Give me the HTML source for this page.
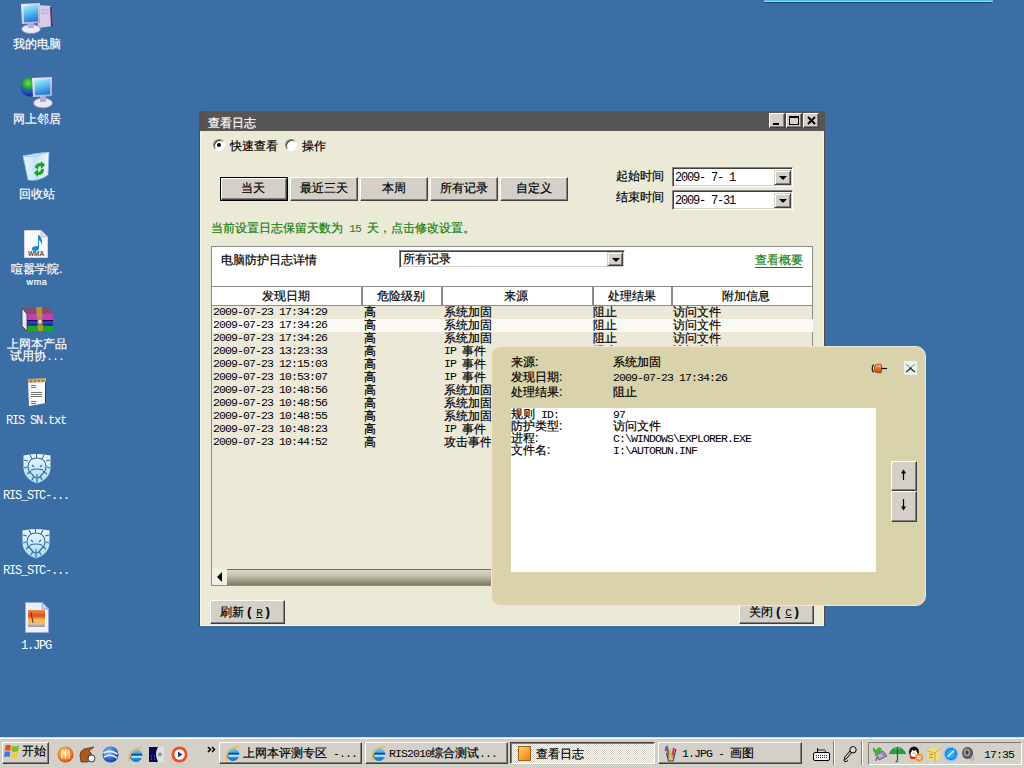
<!DOCTYPE html>
<html><head><meta charset="utf-8">
<style>
*{margin:0;padding:0;box-sizing:border-box}
html,body{width:1024px;height:768px;overflow:hidden}
body{background:#3a6ea5;font-family:"Liberation Sans",sans-serif;-webkit-text-stroke:0.2px;font-size:12px;line-height:12px;color:#000;position:relative}
.a{position:absolute;white-space:nowrap}
.d{font-family:"Liberation Mono",monospace;font-size:11.5px;letter-spacing:-0.9px;-webkit-text-stroke:0}
.lbl{color:#fff;position:absolute;white-space:nowrap;text-align:center;left:0;width:74px;line-height:13px}
.btn{position:absolute;background:#d4d0c8;border:1px solid;border-color:#fff #404040 #404040 #fff;box-shadow:inset -1px -1px 0 #808080;text-align:center}
.sunk{position:absolute;background:#fff;border:1px solid;border-color:#808080 #fff #fff #808080;box-shadow:inset 1px 1px 0 #404040,inset -1px -1px 0 #d4d0c8}
.dd{position:absolute;right:2px;top:2px;bottom:2px;width:16px;background:#d4d0c8;border:1px solid;border-color:#d4d0c8 #404040 #404040 #d4d0c8;box-shadow:inset 1px 1px 0 #fff,inset -1px -1px 0 #808080}
.dd:after{content:"";position:absolute;left:4px;top:5px;border-left:4px solid transparent;border-right:4px solid transparent;border-top:4px solid #000}
.t{line-height:12px}
.d1{position:relative;top:-1px}
.d12{font-size:12px;letter-spacing:-1.2px}
.g{color:#148414}
</style></head><body>

<!-- top blue bar -->
<div class="a" style="left:764px;top:0;width:229px;height:3px;background:linear-gradient(#52b8e8 0,#52b8e8 1px,#88e2fc 1px,#88e2fc 2px,#0a4a7a 2px);border-radius:0 0 3px 3px"></div><div class="a" style="left:765px;top:3px;width:227px;height:1px;background:#3070a8"></div>

<!-- DESKTOP ICONS -->
<svg width="0" height="0" style="position:absolute"><defs>
<linearGradient id="scr" x1="0" y1="0" x2="0.3" y2="1"><stop offset="0" stop-color="#b4f0fc"/><stop offset="0.5" stop-color="#5cc0f0"/><stop offset="1" stop-color="#2a7ed8"/></linearGradient>
<linearGradient id="frm" x1="0" y1="0" x2="1" y2="1"><stop offset="0" stop-color="#f4f4fc"/><stop offset="1" stop-color="#a8a4d0"/></linearGradient>
<radialGradient id="glb" cx="0.4" cy="0.3" r="0.7"><stop offset="0" stop-color="#6ae05a"/><stop offset="0.45" stop-color="#1a9a2a"/><stop offset="0.55" stop-color="#2a5ad0"/><stop offset="1" stop-color="#1a2a90"/></radialGradient>
<linearGradient id="bin" x1="0" y1="0" x2="1" y2="0"><stop offset="0" stop-color="#e8f6fe"/><stop offset="0.5" stop-color="#c4e4fa"/><stop offset="1" stop-color="#f0faff"/></linearGradient>
<linearGradient id="shd" x1="0" y1="0" x2="0" y2="1"><stop offset="0" stop-color="#f0faff"/><stop offset="1" stop-color="#a0d8f8"/></linearGradient>
<linearGradient id="sun" x1="0" y1="0" x2="0" y2="1"><stop offset="0" stop-color="#f09048"/><stop offset="0.35" stop-color="#d85020"/><stop offset="0.55" stop-color="#f8b050"/><stop offset="0.8" stop-color="#f0c070"/><stop offset="1" stop-color="#9890c8"/></linearGradient>
</defs></svg>
<div class="a" style="left:0;top:0;width:75px;height:700px">
  <!-- my computer -->
  <svg class="a" style="left:20px;top:2px" width="34" height="32" viewBox="0 0 34 32">
    <path d="M17 3 L32 4 L33 24 L18 26 Z" fill="#d6cce6"/>
    <path d="M32 4 L33 24 L31 25 L30 5 Z" fill="#3a3a70"/>
    <path d="M21 8 H29 M21 11 H29" stroke="#b0a8cc" stroke-width="1"/>
    <ellipse cx="11" cy="27" rx="9.5" ry="4.5" fill="#ece8f6" stroke="#8c88b8" stroke-width="0.8"/>
    <rect x="8" y="20" width="6" height="6" fill="#b4acd8"/>
    <path d="M1 2 L20 1 L20 21 L2 22 Z" fill="url(#frm)"/>
    <path d="M3.5 4 L18 3.3 L18 19.5 L4 20.2 Z" fill="url(#scr)"/>
  </svg>
  <div class="lbl" style="top:38px">我的电脑</div>
  <!-- network -->
  <svg class="a" style="left:20px;top:76px" width="34" height="33" viewBox="0 0 34 33">
    <circle cx="10" cy="11" r="9.5" fill="url(#glb)"/>
    <ellipse cx="23" cy="27" rx="9.5" ry="5" fill="#ece8f6" stroke="#8c88b8" stroke-width="0.8"/>
    <rect x="20" y="19" width="6" height="7" fill="#b4acd8"/>
    <path d="M12 2 L32 1 L32 20 L13 21 Z" fill="url(#frm)"/>
    <path d="M14.5 4 L30 3.3 L30 18.5 L15 19.2 Z" fill="url(#scr)"/>
  </svg>
  <div class="lbl" style="top:113px">网上邻居</div>
  <!-- recycle bin -->
  <svg class="a" style="left:22px;top:152px" width="28" height="30" viewBox="0 0 28 30">
    <path d="M1 4 Q14 1 27 0 L26 23 Q16 30 6 28 Z" fill="url(#bin)" stroke="#88b8e0" stroke-width="0.8"/>
    <path d="M1 4 Q14 6 27 0" fill="none" stroke="#a8d0f0"/>
    <path d="M13 16 Q13 11 19 11 L19 9 L23 13 L19 17 L19 14 Q16 14 16 17 Z" fill="#18a818"/>
    <path d="M22 17 Q22 23 16 23 L16 25 L12 21 L16 17 L16 20 Q19 20 19 17 Z" fill="#18a818"/>
  </svg>
  <div class="lbl" style="top:188px">回收站</div>
  <!-- wma -->
  <svg class="a" style="left:24px;top:230px" width="25" height="28" viewBox="0 0 25 28">
    <path d="M0.5 0.5 L17 0.5 L23.5 7 L23.5 27.5 L0.5 27.5 Z" fill="#fbfbff" stroke="#d0d4e8"/>
    <path d="M17 0.5 L17 7 L23.5 7" fill="#e0e0ee" stroke="#c0c4d8"/>
    <path d="M14 5 L15 5 Q19 9 18 15 Q17 11 15 10 L15 18 Q15 21 11 21 Q7 21 8 18 Q9 16 13 16 L14 16 Z" fill="#1e88d8"/>
    <text x="12" y="26" font-size="6.5" font-weight="bold" text-anchor="middle" fill="#505050" font-family="Liberation Sans">WMA</text>
  </svg>
  <div class="lbl" style="top:263px;left:-1px;width:76px">喧嚣学院.</div>
  <div class="lbl" style="top:276px;font-family:'Liberation Sans';font-size:9px;letter-spacing:0.6px">wma</div>
  <!-- winrar -->
  <svg class="a" style="left:21px;top:306px" width="33" height="26" viewBox="0 0 33 26">
    <path d="M3 2 L28 1 L32 8 L6 9 Z" fill="#8a4a6a"/>
    <path d="M6 8 L32 8 L32 15 L6 15 Z" fill="#c040b0"/>
    <path d="M6 15 L32 15 L32 19 L6 19 Z" fill="#2838d8"/>
    <path d="M6 19 L32 19 L32 25 L6 25 Z" fill="#18a828"/>
    <path d="M6 14.5 H32 M6 19 H32" stroke="#101040" stroke-width="1"/>
    <path d="M1 2 L6 8 L6 25 L1 20 Z" fill="#f0e8f0" stroke="#303050" stroke-width="0.8"/>
    <path d="M15 1 L21 1 L22 25 L17 25 Z" fill="#c89838" opacity="0.85"/>
    <rect x="17" y="13" width="4" height="5" fill="#e8e0c0" stroke="#404040" stroke-width="0.6"/>
  </svg>
  <div class="lbl" style="top:338px;left:-1px;width:76px">上网本产品</div>
  <div class="lbl" style="top:350px">试用协<span class="d">...</span></div>
  <!-- txt -->
  <svg class="a" style="left:27px;top:377px" width="20" height="30" viewBox="0 0 20 30">
    <path d="M1 3 L19 2 L19 26 L2 29 Z" fill="#f8faff"/>
    <path d="M19 2 L19 26 L18 26 L18 2 Z" fill="#303a60"/>
    <path d="M1 2 L19 1 L19 5 L1 6 Z" fill="#c8b060"/>
    <path d="M3 4 h2 M7 4 h2 M11 4 h2 M15 4 h2" stroke="#a05050" stroke-width="1.5"/>
    <path d="M4 8.5 H9 M4 10.5 H9 M4 15.5 H15 M4 17.5 H15 M4 19.5 H15 M4 24.5 H9 M4 26.5 H9" stroke="#707868" stroke-width="1"/>
  </svg>
  <div class="lbl" style="top:414px;left:-1px"><span class="d d12">RIS&nbsp;SN.txt</span></div>
  <!-- shields -->
  <svg class="a" style="left:23px;top:453px" width="28" height="31" viewBox="0 0 28 31">
    <path d="M0.5 2.5 Q14 -0.5 27.5 2.5 L27.5 15 Q27 26 14 30.5 Q1 26 0.5 15 Z" fill="url(#shd)"/>
    <path d="M13.5 1 V5 M7 2 L9 6 M21 2 L19 6 M1 7 L5 8 M27 7 L23 8 M1 15 L4 14 M27 15 L24 14 M4 21 L8 18 M24 21 L20 18 M9 27 L11 23 M19 27 L17 23 M14 30 V25" stroke="#3a6a98" stroke-width="1.1" fill="none"/>
    <path d="M14 5 Q22 5 23 13 Q23 19 19 21 Q17 25 14 25 Q11 25 9 21 Q5 19 5 13 Q6 5 14 5 Z" fill="none" stroke="#3a6a98" stroke-width="1.2"/>
    <path d="M8 17 Q14 15 20 17 M9 12 L11 14 M19 12 L17 14 M14 21 L14 25" stroke="#3a6a98" stroke-width="1.1" fill="none"/>
  </svg>
  <div class="lbl" style="top:489px;left:-2px;width:76px"><span class="d d12">RIS_STC-...</span></div>
  <svg class="a" style="left:22px;top:528px" width="28" height="31" viewBox="0 0 28 31">
    <path d="M0.5 2.5 Q14 -0.5 27.5 2.5 L27.5 15 Q27 26 14 30.5 Q1 26 0.5 15 Z" fill="url(#shd)"/>
    <path d="M13.5 1 V5 M7 2 L9 6 M21 2 L19 6 M1 7 L5 8 M27 7 L23 8 M1 15 L4 14 M27 15 L24 14 M4 21 L8 18 M24 21 L20 18 M9 27 L11 23 M19 27 L17 23 M14 30 V25" stroke="#3a6a98" stroke-width="1.1" fill="none"/>
    <path d="M14 5 Q22 5 23 13 Q23 19 19 21 Q17 25 14 25 Q11 25 9 21 Q5 19 5 13 Q6 5 14 5 Z" fill="none" stroke="#3a6a98" stroke-width="1.2"/>
    <path d="M8 17 Q14 15 20 17 M9 12 L11 14 M19 12 L17 14 M14 21 L14 25" stroke="#3a6a98" stroke-width="1.1" fill="none"/>
  </svg>
  <div class="lbl" style="top:564px;left:-2px;width:76px"><span class="d d12">RIS_STC-...</span></div>
  <!-- jpg -->
  <svg class="a" style="left:25px;top:602px" width="24" height="31" viewBox="0 0 24 31">
    <path d="M0.5 0.5 L17 0.5 L23.5 7 L23.5 30.5 L0.5 30.5 Z" fill="#eaf0fe" stroke="#9aa8d8"/>
    <path d="M17 0.5 L17 7 L23.5 7" fill="#c8d4f4" stroke="#9aa8d8"/>
    <rect x="3" y="8" width="17" height="17" fill="url(#sun)"/>
    <path d="M6 10 L8 21" stroke="#503030" stroke-width="1"/>
  </svg>
  <div class="lbl" style="top:639px;left:-1px"><span class="d d12">1.JPG</span></div>
</div>

<!-- MAIN WINDOW -->
<div class="a" style="left:199px;top:111px;width:626px;height:515px;background:#ebead6;border:1px solid #4e4c48;border-top:0;border-bottom:0;box-shadow:inset 1px 0 0 #fbf4e2,inset -1px 0 0 #fbf4e2,inset 0 -1px 0 #fdf8e6">
 <div class="a" style="left:0;top:-1px;width:624px;height:516px">
  <div class="a" style="left:-1px;top:1px;width:626px;height:20px;background:#585555"></div>
  <div class="a" style="left:-1px;top:1px;width:9px;height:20px;background:linear-gradient(90deg,#5c4e4a,#585555)"></div>
  <div class="a" style="left:8px;top:7px;color:#fff">查看日志</div>
  <div class="btn" style="left:569px;top:3px;width:16px;height:15px"><div class="a" style="left:3px;top:9px;width:6px;height:2px;background:#000"></div></div>
  <div class="btn" style="left:586px;top:3px;width:16px;height:15px"><div class="a" style="left:2px;top:2px;width:10px;height:9px;border:1px solid #000;border-top-width:2px"></div></div>
  <div class="btn" style="left:603px;top:3px;width:16px;height:15px"><svg class="a" style="left:3px;top:2px" width="9" height="9"><path d="M1 1 L8 8 M8 1 L1 8" stroke="#000" stroke-width="2"/></svg></div>

  <!-- radios -->
  <div class="a" style="left:13px;top:29px;width:12px;height:12px;border-radius:50%;background:#fff;border:1px solid;border-color:#808080 #fff #fff #808080;box-shadow:inset 1px 1px 0 #404040"><div class="a" style="left:3px;top:3px;width:4px;height:4px;border-radius:50%;background:#000"></div></div>
  <div class="a" style="left:30px;top:30px">快速查看</div>
  <div class="a" style="left:85px;top:29px;width:12px;height:12px;border-radius:50%;background:#fff;border:1px solid;border-color:#808080 #fff #fff #808080;box-shadow:inset 1px 1px 0 #404040"></div>
  <div class="a" style="left:102px;top:30px">操作</div>

  <!-- buttons row -->
  <div class="a" style="left:20px;top:67px;width:68px;height:24px;border:1px solid #000"></div>
  <div class="btn" style="left:21px;top:68px;width:66px;height:22px;line-height:19px;padding-right:3px">当天</div>
  <div class="btn" style="left:90px;top:67px;width:68px;height:24px;line-height:21px">最近三天</div>
  <div class="btn" style="left:160px;top:67px;width:68px;height:24px;line-height:21px">本周</div>
  <div class="btn" style="left:230px;top:67px;width:68px;height:24px;line-height:21px">所有记录</div>
  <div class="btn" style="left:300px;top:67px;width:68px;height:24px;line-height:21px">自定义</div>

  <!-- date pickers -->
  <div class="a" style="left:416px;top:60px">起始时间</div>
  <div class="a" style="left:416px;top:81px">结束时间</div>
  <div class="sunk" style="left:472px;top:57px;width:121px;height:20px"><div class="a d" style="left:2px;top:4px;font-size:12px;letter-spacing:-1.2px">2009-&nbsp;7-&nbsp;1</div><div class="dd" style="right:1px;top:2px;bottom:1px;width:17px"></div></div>
  <div class="sunk" style="left:472px;top:80px;width:121px;height:20px"><div class="a d" style="left:2px;top:4px;font-size:12px;letter-spacing:-1.2px">2009-&nbsp;7-31</div><div class="dd" style="right:1px;top:2px;bottom:1px;width:17px"></div></div>

  <div class="a g" style="left:11px;top:112px">当前设置日志保留天数为<span class="d">&nbsp;15&nbsp;</span>天，点击修改设置。</div>

  <!-- list panel -->
  <div class="a" style="left:11px;top:136px;width:602px;height:340px;border:1px solid #8c8c8c;background:#ece9d8">
    <div class="a" style="left:0;top:0;width:600px;height:58px;background:#fff"></div>
    <div class="a" style="left:9px;top:7px">电脑防护日志详情</div>
    <div class="sunk" style="left:187px;top:3px;width:226px;height:18px"><div class="a" style="left:3px;top:2px">所有记录</div><div class="dd" style="right:1px;top:1px;bottom:1px"></div></div>
    <div class="a g" style="left:543px;top:7px;border-bottom:1px solid #148414;padding-bottom:1px">查看概要</div>
    <!-- header -->
    <div class="a" style="left:0;top:39px;width:600px;height:20px;border-top:1px solid #8c8c8c;border-bottom:1px solid #8c8c8c;background:#fff"></div>
    <div class="a" style="left:149px;top:40px;width:2px;height:18px;background:#8c8c8c"></div>
    <div class="a" style="left:229px;top:40px;width:2px;height:18px;background:#8c8c8c"></div>
    <div class="a" style="left:380px;top:40px;width:2px;height:18px;background:#8c8c8c"></div>
    <div class="a" style="left:459px;top:40px;width:2px;height:18px;background:#8c8c8c"></div>
    <div class="a" style="left:-1px;top:43px;width:150px;text-align:center">发现日期</div>
    <div class="a" style="left:149px;top:43px;width:79px;text-align:center">危险级别</div>
    <div class="a" style="left:229px;top:43px;width:150px;text-align:center">来源</div>
    <div class="a" style="left:381px;top:43px;width:78px;text-align:center">处理结果</div>
    <div class="a" style="left:464px;top:43px;width:140px;text-align:center">附加信息</div>
<div class="a" style="left:1px;top:59px;width:600px;height:13px;background:transparent"></div>
<div class="a t" style="left:1px;top:59px"><span class="d d1">2009-07-23&nbsp;17:34:29</span></div>
<div class="a t" style="left:152px;top:59px">高</div>
<div class="a t" style="left:232px;top:59px">系统加固</div>
<div class="a t" style="left:381px;top:59px">阻止</div>
<div class="a t" style="left:461px;top:59px">访问文件</div>
<div class="a" style="left:1px;top:72px;width:600px;height:13px;background:#fbfaf4"></div>
<div class="a t" style="left:1px;top:72px"><span class="d d1">2009-07-23&nbsp;17:34:26</span></div>
<div class="a t" style="left:152px;top:72px">高</div>
<div class="a t" style="left:232px;top:72px">系统加固</div>
<div class="a t" style="left:381px;top:72px">阻止</div>
<div class="a t" style="left:461px;top:72px">访问文件</div>
<div class="a" style="left:1px;top:85px;width:600px;height:13px;background:transparent"></div>
<div class="a t" style="left:1px;top:85px"><span class="d d1">2009-07-23&nbsp;17:34:26</span></div>
<div class="a t" style="left:152px;top:85px">高</div>
<div class="a t" style="left:232px;top:85px">系统加固</div>
<div class="a t" style="left:381px;top:85px">阻止</div>
<div class="a t" style="left:461px;top:85px">访问文件</div>
<div class="a" style="left:1px;top:98px;width:600px;height:13px;background:transparent"></div>
<div class="a t" style="left:1px;top:98px"><span class="d d1">2009-07-23&nbsp;13:23:33</span></div>
<div class="a t" style="left:152px;top:98px">高</div>
<div class="a t" style="left:232px;top:98px"><span class="d d1">IP&nbsp;</span>事件</div>
<div class="a t" style="left:381px;top:98px">阻止</div>
<div class="a t" style="left:461px;top:98px">访问文件</div>
<div class="a" style="left:1px;top:111px;width:600px;height:13px;background:transparent"></div>
<div class="a t" style="left:1px;top:111px"><span class="d d1">2009-07-23&nbsp;12:15:03</span></div>
<div class="a t" style="left:152px;top:111px">高</div>
<div class="a t" style="left:232px;top:111px"><span class="d d1">IP&nbsp;</span>事件</div>
<div class="a t" style="left:381px;top:111px">阻止</div>
<div class="a t" style="left:461px;top:111px">访问文件</div>
<div class="a" style="left:1px;top:124px;width:600px;height:13px;background:transparent"></div>
<div class="a t" style="left:1px;top:124px"><span class="d d1">2009-07-23&nbsp;10:53:07</span></div>
<div class="a t" style="left:152px;top:124px">高</div>
<div class="a t" style="left:232px;top:124px"><span class="d d1">IP&nbsp;</span>事件</div>
<div class="a t" style="left:381px;top:124px">阻止</div>
<div class="a t" style="left:461px;top:124px">访问文件</div>
<div class="a" style="left:1px;top:137px;width:600px;height:13px;background:transparent"></div>
<div class="a t" style="left:1px;top:137px"><span class="d d1">2009-07-23&nbsp;10:48:56</span></div>
<div class="a t" style="left:152px;top:137px">高</div>
<div class="a t" style="left:232px;top:137px">系统加固</div>
<div class="a t" style="left:381px;top:137px">阻止</div>
<div class="a t" style="left:461px;top:137px">访问文件</div>
<div class="a" style="left:1px;top:150px;width:600px;height:13px;background:transparent"></div>
<div class="a t" style="left:1px;top:150px"><span class="d d1">2009-07-23&nbsp;10:48:56</span></div>
<div class="a t" style="left:152px;top:150px">高</div>
<div class="a t" style="left:232px;top:150px">系统加固</div>
<div class="a t" style="left:381px;top:150px">阻止</div>
<div class="a t" style="left:461px;top:150px">访问文件</div>
<div class="a" style="left:1px;top:163px;width:600px;height:13px;background:transparent"></div>
<div class="a t" style="left:1px;top:163px"><span class="d d1">2009-07-23&nbsp;10:48:55</span></div>
<div class="a t" style="left:152px;top:163px">高</div>
<div class="a t" style="left:232px;top:163px">系统加固</div>
<div class="a t" style="left:381px;top:163px">阻止</div>
<div class="a t" style="left:461px;top:163px">访问文件</div>
<div class="a" style="left:1px;top:176px;width:600px;height:13px;background:transparent"></div>
<div class="a t" style="left:1px;top:176px"><span class="d d1">2009-07-23&nbsp;10:48:23</span></div>
<div class="a t" style="left:152px;top:176px">高</div>
<div class="a t" style="left:232px;top:176px"><span class="d d1">IP&nbsp;</span>事件</div>
<div class="a t" style="left:381px;top:176px">阻止</div>
<div class="a t" style="left:461px;top:176px">访问文件</div>
<div class="a" style="left:1px;top:189px;width:600px;height:13px;background:transparent"></div>
<div class="a t" style="left:1px;top:189px"><span class="d d1">2009-07-23&nbsp;10:44:52</span></div>
<div class="a t" style="left:152px;top:189px">高</div>
<div class="a t" style="left:232px;top:189px">攻击事件</div>
<div class="a t" style="left:381px;top:189px">阻止</div>
<div class="a t" style="left:461px;top:189px">访问文件</div>
    <!-- scrollbar -->
    <div class="a" style="left:0;top:322px;width:600px;height:16px;border-top:1px solid #6a6858;background:linear-gradient(#dcd8cc,#c4c0ac 40%,#7c7a62)"></div>
    <div class="a" style="left:0;top:322px;width:15px;height:16px;background:#f2f0e4"><div class="a" style="left:5px;top:3px;border-top:5px solid transparent;border-bottom:5px solid transparent;border-right:5px solid #000"></div></div>
  </div>

  <div class="btn" style="left:10px;top:490px;width:75px;height:24px;line-height:22px">刷新<span style="display:inline-block;width:12px;text-align:right;padding-right:5px;font-weight:bold">(</span><u class="d" style="letter-spacing:0;font-size:11px">R</u><span style="display:inline-block;width:12px;text-align:left;padding-left:3px;font-weight:bold">)</span></div>
  <div class="btn" style="left:539px;top:490px;width:75px;height:24px;line-height:22px">关闭<span style="display:inline-block;width:12px;text-align:right;padding-right:5px;font-weight:bold">(</span><u class="d" style="letter-spacing:0;font-size:11px">C</u><span style="display:inline-block;width:12px;text-align:left;padding-left:3px;font-weight:bold">)</span></div>
 </div>
</div>

<!-- POPUP -->
<div class="a" style="left:491px;top:346px;width:435px;height:260px;background:#d8d3ab;border-radius:10px;border:1px solid #eae6d0;box-shadow:inset 0 0 0 1px #dcd4b0,inset 0 0 0 3px #e0d2ac">
  <div class="a" style="left:19px;top:9px">来源:</div>
  <div class="a" style="left:19px;top:24px">发现日期:</div>
  <div class="a" style="left:19px;top:39px">处理结果:</div>
  <div class="a" style="left:121px;top:9px">系统加固</div>
  <div class="a" style="left:121px;top:24px"><span class="d">2009-07-23&nbsp;17:34:26</span></div>
  <div class="a" style="left:121px;top:39px">阻止</div>
  <svg class="a" style="left:379px;top:16px" width="17" height="11" viewBox="0 0 17 11"><defs><linearGradient id="pg" x1="0" y1="0" x2="0" y2="1"><stop offset="0" stop-color="#ffc090"/><stop offset="0.5" stop-color="#f07020"/><stop offset="1" stop-color="#c04808"/></linearGradient></defs><path d="M2.5 1.5 Q0 5.5 2.5 9.5" stroke="#301808" stroke-width="1.3" fill="none"/><path d="M4 2 L9 1 Q10.5 1 10.5 2.5 L10.5 8.5 Q10.5 10 9 10 L4 9 Q3 5.5 4 2 Z" fill="url(#pg)" stroke="#704018" stroke-width="0.8"/><path d="M10.5 5.5 H16" stroke="#000" stroke-width="1.2"/></svg>
  <svg class="a" style="left:412px;top:14px" width="13" height="14" viewBox="0 0 13 14"><rect x="0" y="0" width="13" height="14" fill="#eef2ee"/><path d="M2 3.5 Q5 5 6.5 7 Q8 5 11 3.5" stroke="#8898a8" stroke-width="1.2" fill="none"/><path d="M2 11 Q5 9 6.5 7 Q8 9 11 11" stroke="#303840" stroke-width="1.3" fill="none"/></svg>
  <div class="a" style="left:19px;top:61px;width:365px;height:164px;background:#fff">
    <div class="a" style="left:0;top:0px">规则<span class="d">&nbsp;ID:</span></div>
    <div class="a" style="left:0;top:12px">防护类型:</div>
    <div class="a" style="left:0;top:24px">进程:</div>
    <div class="a" style="left:0;top:36px">文件名:</div>
    <div class="a" style="left:102px;top:0px"><span class="d">97</span></div>
    <div class="a" style="left:102px;top:12px">访问文件</div>
    <div class="a" style="left:102px;top:24px"><span class="d">C:\WINDOWS\EXPLORER.EXE</span></div>
    <div class="a" style="left:102px;top:36px"><span class="d">I:\AUTORUN.INF</span></div>
  </div>
  <div class="btn" style="left:399px;top:114px;width:26px;height:30px"><svg class="a" style="left:7px;top:6px" width="9" height="13"><path d="M4.5 2 V12" stroke="#000" stroke-width="1.2"/><path d="M2 5.5 L4.5 1.5 L7 5.5 Z" fill="#000"/></svg></div>
  <div class="btn" style="left:399px;top:144px;width:26px;height:31px"><svg class="a" style="left:7px;top:7px" width="9" height="13"><path d="M4.5 0 V10" stroke="#000" stroke-width="1.2"/><path d="M2 7.5 L4.5 11.5 L7 7.5 Z" fill="#000"/></svg></div>
</div>

<!-- TASKBAR -->
<div class="a" style="left:0;top:737px;width:1024px;height:31px;background:#d4d0c8;border-top:1px solid #dedad2;box-shadow:inset 0 1px 0 #fff"></div>
<div class="btn" style="left:2px;top:742px;width:47px;height:22px"></div>
<svg class="a" style="left:4px;top:744px" width="16" height="15" viewBox="0 0 16 15"><path d="M1.5 1.5 Q4 0 7 1.5 L6.3 6.8 Q3.5 5.5 0.8 6.8 Z" fill="#e8501a"/><path d="M8 1.8 Q11 3.5 15 1.5 L14.2 7 Q11 8.8 7.3 7 Z" fill="#7ac02a"/><path d="M0.7 7.8 Q3.5 6.5 6.2 7.8 L5.5 13 Q2.8 11.8 0 13 Z" fill="#3a78e0"/><path d="M7.2 8 Q10.5 9.8 14 8 L13.3 13.3 Q10 15 6.5 13.2 Z" fill="#f0d020"/></svg>
<div class="a" style="left:22px;top:745px">开始</div>
<!-- quick launch -->
<svg width="0" height="0" style="position:absolute"><defs>
<radialGradient id="orb" cx="0.45" cy="0.4" r="0.6"><stop offset="0" stop-color="#fff0c0"/><stop offset="0.5" stop-color="#f8a040"/><stop offset="1" stop-color="#d04810"/></radialGradient>
<radialGradient id="ge" cx="0.4" cy="0.35" r="0.7"><stop offset="0" stop-color="#a0c8ff"/><stop offset="0.6" stop-color="#3068d0"/><stop offset="1" stop-color="#183890"/></radialGradient>
</defs></svg>
<svg class="a" style="left:57px;top:746px" width="17" height="17"><circle cx="8.5" cy="8.5" r="8" fill="url(#orb)"/><path d="M5 13 Q4 7 6 4 M8.5 13 V3.5 M12 13 Q13 7 11 4" stroke="#fff8e0" stroke-width="1" fill="none"/></svg>
<svg class="a" style="left:79px;top:746px" width="17" height="17"><path d="M2 16 L1 9 Q1 5 5 3 L15 1 L10 5 Q13 7 13 10 L9 16 Z" fill="#a85a20" stroke="#603010" stroke-width="0.8"/><circle cx="12.5" cy="12.5" r="3.5" fill="#fff" stroke="#333"/></svg>
<svg class="a" style="left:102px;top:746px" width="17" height="17"><circle cx="8.5" cy="8.5" r="8" fill="url(#ge)"/><path d="M1.5 7 Q8 3 15.5 8 M2 11 Q9 7 15 12" stroke="#e8f4ff" stroke-width="1.6" fill="none"/></svg>
<svg class="a" style="left:127px;top:746px" width="17" height="17"><defs><linearGradient id="ieg" x1="0" y1="0" x2="0" y2="1"><stop offset="0" stop-color="#70c8f8"/><stop offset="1" stop-color="#1070c8"/></linearGradient></defs><circle cx="9" cy="9.5" r="6.5" fill="url(#ieg)"/><path d="M4 8.5 H15" stroke="#0a4a98" stroke-width="1.5"/><path d="M4.5 11 H15.5" stroke="#e8f8ff" stroke-width="1.4"/><path d="M3 15.5 Q0.5 12 4 7 Q8 2 15 1.5" stroke="#f0b848" stroke-width="1.6" fill="none"/></svg>
<svg class="a" style="left:148px;top:746px" width="17" height="17"><rect x="1" y="1" width="15" height="15" fill="#080850"/><path d="M3 10 h1 M3 13 h1 M6 10 h1 M6 13 h1" stroke="#8080ff"/><path d="M10 1 Q6 8 10 16 L16 16 L16 1 Z" fill="#e0e0e8"/><circle cx="12" cy="8.5" r="2" fill="#909098"/></svg>
<svg class="a" style="left:171px;top:746px" width="17" height="17"><circle cx="8.5" cy="8.5" r="8" fill="#e85020"/><circle cx="8.5" cy="8.5" r="5.2" fill="#fff"/><path d="M7 5.5 L11.5 8.5 L7 11.5 Z" fill="#283880"/></svg>
<svg class="a" style="left:207px;top:746px" width="9" height="8"><path d="M1 1 L3.5 3.5 L1 6 M5 1 L7.5 3.5 L5 6" stroke="#000" stroke-width="1.5" fill="none"/></svg>
<!-- task buttons -->
<div class="btn" style="left:219px;top:742px;width:143px;height:22px"></div>
<svg class="a" style="left:224px;top:745px" width="17" height="17"><defs><linearGradient id="ieg" x1="0" y1="0" x2="0" y2="1"><stop offset="0" stop-color="#70c8f8"/><stop offset="1" stop-color="#1070c8"/></linearGradient></defs><circle cx="9" cy="9.5" r="6.5" fill="url(#ieg)"/><path d="M4 8.5 H15" stroke="#0a4a98" stroke-width="1.5"/><path d="M4.5 11 H15.5" stroke="#e8f8ff" stroke-width="1.4"/><path d="M3 15.5 Q0.5 12 4 7 Q8 2 15 1.5" stroke="#f0b848" stroke-width="1.6" fill="none"/></svg>
<div class="a" style="left:243px;top:747px">上网本评测专区<span class="d">&nbsp;-...</span></div>
<div class="btn" style="left:365px;top:742px;width:143px;height:22px"></div>
<svg class="a" style="left:370px;top:745px" width="17" height="17"><defs><linearGradient id="ieg" x1="0" y1="0" x2="0" y2="1"><stop offset="0" stop-color="#70c8f8"/><stop offset="1" stop-color="#1070c8"/></linearGradient></defs><circle cx="9" cy="9.5" r="6.5" fill="url(#ieg)"/><path d="M4 8.5 H15" stroke="#0a4a98" stroke-width="1.5"/><path d="M4.5 11 H15.5" stroke="#e8f8ff" stroke-width="1.4"/><path d="M3 15.5 Q0.5 12 4 7 Q8 2 15 1.5" stroke="#f0b848" stroke-width="1.6" fill="none"/></svg>
<div class="a" style="left:389px;top:747px"><span class="d">RIS2010</span>综合测试<span class="d">...</span></div>
<div class="a" style="left:510px;top:742px;width:145px;height:22px;border:1px solid;border-color:#404040 #fff #fff #404040;box-shadow:inset 1px 1px 0 #808080;background:repeating-conic-gradient(#fff 0 25%,#d4d0c8 0 50%) 0 0/2px 2px"></div>
<div class="a" style="left:518px;top:746px;width:13px;height:15px;background:linear-gradient(135deg,#ffd060,#f08010);border:1px solid #a06020"></div>
<div class="a" style="left:536px;top:748px">查看日志</div>
<div class="btn" style="left:658px;top:742px;width:144px;height:22px"></div>
<svg class="a" style="left:664px;top:745px" width="15" height="17" viewBox="0 0 15 17"><path d="M2 6 Q1.5 3 3 2 L5 12" stroke="#7060a0" stroke-width="2.2" fill="none"/><path d="M6 4 L7 13" stroke="#e8c040" stroke-width="2.2"/><path d="M10 3 L8 13" stroke="#c84050" stroke-width="2.2"/><path d="M3.5 10 L5 13" stroke="#40a040" stroke-width="2"/><path d="M2.5 8 L4.5 16 L9 16 L12 4" stroke="#504038" stroke-width="1.1" fill="none"/><path d="M4.5 10 L9 10 L8.5 15 L5 15 Z" fill="#e0c070" opacity="0.8"/></svg>
<div class="a" style="left:682px;top:747px"><span class="d">1.JPG&nbsp;-&nbsp;</span>画图</div>
<!-- separators -->
<div class="a" style="left:833px;top:741px;width:2px;height:24px;border-left:1px solid #808080;border-right:1px solid #fff"></div>
<div class="a" style="left:861px;top:741px;width:2px;height:24px;border-left:1px solid #808080;border-right:1px solid #fff"></div>
<svg class="a" style="left:813px;top:747px" width="17" height="15" viewBox="0 0 17 15"><path d="M4.5 3.5 Q5 1.5 6 3.5 Q7 1.5 8 3.5 Q9 1.5 10 3.5 Q11 1.5 12 3.5 L12.5 5" stroke="#000" fill="none" stroke-width="0.9"/><path d="M4.5 1 V5" stroke="#000" stroke-width="0.9"/><rect x="0.5" y="5.5" width="16" height="8" rx="1.5" fill="#f4f4f4" stroke="#000"/><path d="M3 8.5 H14 M3 10.5 H14" stroke="#303030" stroke-dasharray="1 1"/></svg>
<svg class="a" style="left:842px;top:746px" width="15" height="16" viewBox="0 0 15 16"><path d="M3.5 12 L9.5 5" stroke="#000" stroke-width="3" stroke-linecap="round"/><path d="M3.5 12 L9.5 5" stroke="#e0e0e0" stroke-width="1.2" stroke-linecap="round"/><path d="M3 12.5 Q1 14 2.5 15.5 Q4.5 16 6 14.5" stroke="#000" stroke-width="1" fill="none"/><circle cx="11" cy="3.8" r="3.2" fill="#d0d0d0" stroke="#000" stroke-width="1"/><path d="M9.5 2.5 h1 M11.5 3.5 h1 M9.5 4.5 h1 M11.5 1.5 h1" stroke="#fff"/></svg>
<!-- tray -->
<div class="a" style="left:868px;top:742px;width:154px;height:23px;border:1px solid;border-color:#808080 #fff #fff #808080"></div>
<svg class="a" style="left:872px;top:746px" width="15" height="16" viewBox="0 0 15 16"><path d="M3 8 L11 5 L15 10 L7 14 Z" fill="#9890b0" stroke="#505070" stroke-width="0.8"/><path d="M6 10 L10 8.5 M7 11.5 L11 10" stroke="#e0e0f0" stroke-width="0.8"/><path d="M1 1 L4 4 L7 1 L10 3 L7 8 L4 8 L1 5 Z" fill="#40b030"/><path d="M4 15 Q3 12 6 12" stroke="#505050" fill="none"/></svg>
<svg class="a" style="left:889px;top:746px" width="17" height="17" viewBox="0 0 17 17"><path d="M0.5 8 Q2 2 8.5 1.5 Q15 2 16.5 8 Q14 6.5 12.5 8 Q10.5 6.5 8.5 8 Q6.5 6.5 4.5 8 Q3 6.5 0.5 8 Z" fill="#28a048" stroke="#106030" stroke-width="0.6"/><path d="M6 3 Q8.5 2 11 3" stroke="#80e090" fill="none"/><path d="M8.5 1 V14 Q8.5 16 6.5 15.5" stroke="#1a6a3a" stroke-width="1.3" fill="none"/></svg>
<svg class="a" style="left:907px;top:746px" width="16" height="16" viewBox="0 0 16 16"><ellipse cx="7" cy="6" rx="5" ry="5.5" fill="#111"/><ellipse cx="7" cy="8" rx="3.5" ry="3" fill="#fff"/><circle cx="5.5" cy="5" r="0.9" fill="#fff"/><circle cx="8.5" cy="5" r="0.9" fill="#fff"/><path d="M5 7 Q7 6 9 7 Q7 9 5 7 Z" fill="#f0b020"/><path d="M2 10 Q7 12 11 10 L10 13 L4 13 Z" fill="#d82020"/><path d="M3 13 Q3 16 7 15.5" fill="#f0c040"/><circle cx="12" cy="11.5" r="4" fill="#f09828"/><path d="M10 10.5 H14 M10 12.5 H14" stroke="#fff" stroke-width="0.9"/></svg>
<svg class="a" style="left:926px;top:746px" width="15" height="16" viewBox="0 0 15 16"><path d="M1 5 L6 1 L14 3 L14 12 L9 15.5 L1 13 Z" fill="#f4dc78"/><path d="M1 5 L9 7 L14 3 M9 7 V15.5" stroke="#c0a040" fill="none" stroke-width="0.8"/><path d="M3 8 L7 9 M3 11 L7 12" stroke="#a08020" stroke-width="0.8"/></svg>
<svg class="a" style="left:943px;top:746px" width="16" height="16" viewBox="0 0 16 16"><circle cx="8" cy="8" r="7.5" fill="#80c8f8"/><circle cx="8" cy="8" r="6" fill="#1a78d8"/><circle cx="8" cy="8" r="4.5" fill="#30a8f0"/><path d="M4.5 11 L11 4.5" stroke="#e0f4ff" stroke-width="1.4"/></svg>
<svg class="a" style="left:961px;top:746px" width="15" height="16" viewBox="0 0 15 16"><ellipse cx="6.5" cy="7" rx="5.5" ry="6" fill="#505058"/><ellipse cx="6" cy="6.5" rx="3.5" ry="4" fill="#9898a0"/><ellipse cx="6" cy="6.5" rx="1.5" ry="2" fill="#404048"/><path d="M12 9 Q14 12 11 15 M10 10 Q11.5 12 9.5 14" stroke="#a090d8" fill="none" stroke-width="0.9"/></svg>
<div class="a" style="left:984px;top:748px"><span class="d">17:35</span></div>

</body></html>
